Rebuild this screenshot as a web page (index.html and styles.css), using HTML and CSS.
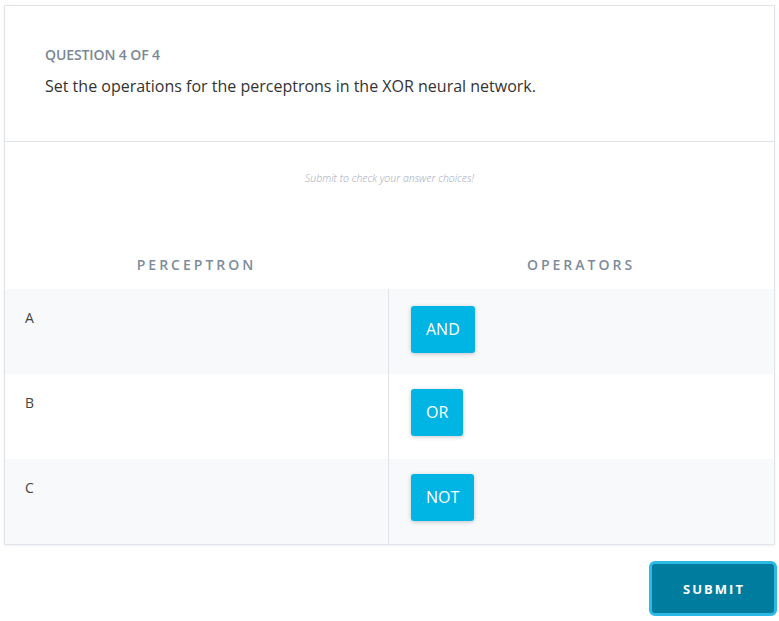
FILE: index.html
```html
<!DOCTYPE html>
<html>
<head>
<meta charset="utf-8">
<link rel="stylesheet" href="styles.css">
</head>
<body>
<div class="page">
  <div class="card">
    <div class="card-head">
      <div class="eyebrow">QUESTION 4 OF 4</div>
      <div class="question">Set the operations for the perceptrons in the XOR neural network.</div>
    </div>
    <div class="card-body">
      <div class="hint">Submit to check your answer choices!</div>
      <div class="table">
        <div class="th">PERCEPTRON</div>
        <div class="th">OPERATORS</div>
        <div class="td label shade">A</div>
        <div class="td ops first shade"><span class="chip">AND</span></div>
        <div class="td label">B</div>
        <div class="td ops"><span class="chip">OR</span></div>
        <div class="td label shade">C</div>
        <div class="td ops shade"><span class="chip">NOT</span></div>
      </div>
    </div>
  </div>
  <div class="actions">
    <button class="submit">SUBMIT</button>
  </div>
</div>
</body>
</html>
```
FILE: styles.css
```css
* { box-sizing: border-box; }
html, body { margin: 0; padding: 0; background: #fff; }
body { font-family: "Open Sans", "Liberation Sans", sans-serif; color: #333; }
.page { padding: 5px 2px 0 4px; width: 779px; }
.card {
  width: 771px;
  border: 1px solid #dfe4ea;
  background: #fff;
  box-shadow: 0 1px 3px rgba(0, 0, 0, 0.06);
}
.card-head {
  padding: 39px 40px 43px 40px;
  border-bottom: 1px solid #dde2e8;
}
.eyebrow {
  font-size: 14px;
  line-height: 20px;
  font-weight: 600;
  color: #7a8795;
  letter-spacing: -0.1px;
}
.question {
  margin-top: 9px;
  font-size: 16px;
  line-height: 24px;
  color: #333;
}
.card-body { padding-top: 29px; }
.hint {
  text-align: center;
  font-size: 10.5px;
  line-height: 14px;
  font-style: italic;
  font-weight: 300;
  color: #9ea7b8;
}
.table {
  margin-top: 70px;
  display: grid;
  grid-template-columns: 383px 1fr;
  grid-auto-rows: auto;
}
.th {
  text-align: center;
  font-size: 14px;
  line-height: 20px;
  font-weight: 600;
  letter-spacing: 3px;
  color: #7d8c9c;
  padding-bottom: 14px;
}
.td { height: 85px; }
.shade { background: #f8f9fb; }
.label {
  padding: 19px 20px 0 20px;
  font-size: 14px;
  line-height: 20px;
  color: #444;
}
.ops {
  border-left: 1px solid #dfe4ea;
  padding: 15px 0 0 22px;
}
.ops.first { padding-top: 17px; }
.chip {
  display: inline-block;
  height: 47px;
  line-height: 47px;
  padding: 0 15px;
  background: #00b4e4;
  color: #fff;
  font-size: 16px;
  border-radius: 3px;
  box-shadow: 0 1px 4px rgba(0, 0, 0, 0.22);
}
.actions {
  display: flex;
  justify-content: flex-end;
  padding-top: 16px;
}
.submit {
  width: 128px;
  height: 55px;
  border: 3px solid #2cb9e6;
  border-radius: 6px;
  background: #007c9f;
  color: #fff;
  font-family: "Open Sans", "Liberation Sans", sans-serif;
  font-size: 13px;
  font-weight: 700;
  letter-spacing: 2px;
  padding: 0 0 0 2px;
}
```
